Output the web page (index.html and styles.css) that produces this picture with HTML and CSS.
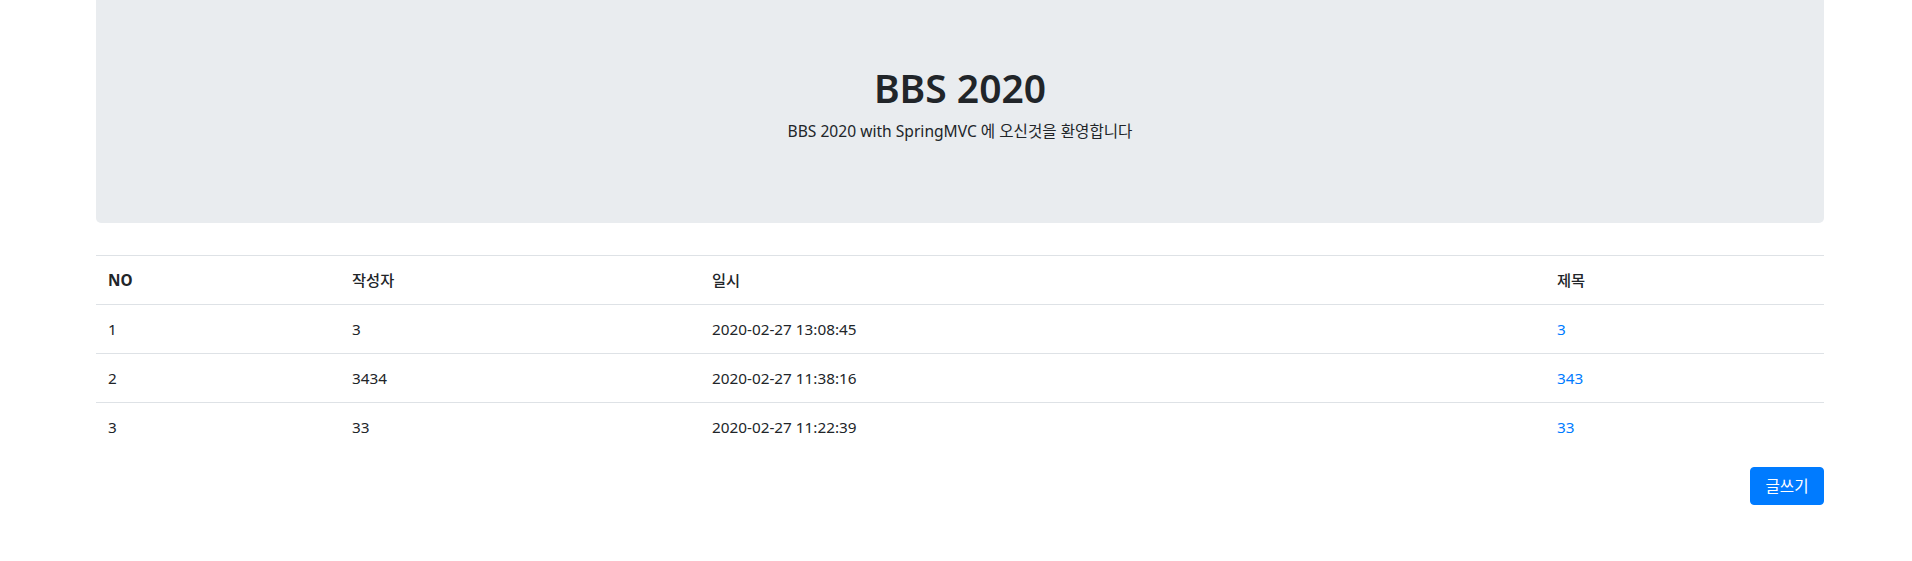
FILE: index.html
```html
<!DOCTYPE html>
<html lang="ko">
<head>
<meta charset="utf-8">
<title>BBS 2020</title>
<link rel="stylesheet" href="styles.css">
</head>
<body>
<div class="container">
  <header class="jumbotron">
    <h1 class="title">BBS 2020</h1>
    <p class="lead">BBS 2020 with SpringMVC 에 오신것을 환영합니다</p>
  </header>
  <table class="table">
    <tr>
      <th class="c-no">NO</th>
      <th class="c-writer">작성자</th>
      <th class="c-date">일시</th>
      <th class="c-subject">제목</th>
    </tr>
    <tr>
      <td>1</td><td>3</td><td>2020-02-27 13:08:45</td><td><a href="#">3</a></td>
    </tr>
    <tr>
      <td>2</td><td>3434</td><td>2020-02-27 11:38:16</td><td><a href="#">343</a></td>
    </tr>
    <tr>
      <td>3</td><td>33</td><td>2020-02-27 11:22:39</td><td><a href="#">33</a></td>
    </tr>
  </table>
  <div class="actions">
    <button class="btn" type="button">글쓰기</button>
  </div>
</div>
</body>
</html>
```
FILE: styles.css
```css
* { box-sizing: border-box; }
html, body {
  margin: 0;
  padding: 0;
  background: #fff;
}
body {
  font-family: "Noto Sans", "Noto Sans CJK KR", sans-serif;
  font-size: 16px;
  line-height: 1.5;
  color: #212529;
}
.container {
  padding: 0 88px 0 96px;
}
.jumbotron {
  background: #e9ecef;
  border-radius: 0 0 5px 5px;
  padding: 64px 32px;
  margin-bottom: 32px;
  text-align: center;
}
.title {
  margin: 0 0 8px;
  font-size: 39px;
  line-height: 48px;
  font-weight: 600;
}
.lead {
  margin: 0 0 16px;
  font-size: 15.6px;
}
.table {
  width: 100%;
  border-collapse: collapse;
  margin-bottom: 16px;
  table-layout: fixed;
}
.table th, .table td {
  padding: 12px;
  border-top: 1px solid #dee2e6;
  text-align: left;
  vertical-align: top;
  font-size: 15.3px;
  line-height: 24px;
}
.table th { font-weight: 700; }
.table th.c-writer, .table th.c-date, .table th.c-subject { font-weight: 500; }
.c-no { width: 244px; }
.c-writer { width: 360px; }
.c-date { width: 845px; }
.c-subject { width: 279px; }
.table a {
  color: #007bff;
  text-decoration: none;
}
.actions {
  display: flex;
  justify-content: flex-end;
}
.btn {
  font-family: inherit;
  font-size: 15.6px;
  line-height: 24px;
  color: #fff;
  background: #007bff;
  border: 1px solid #007bff;
  border-radius: 4px;
  padding: 6px 12px;
  height: 38px;
  width: 74px;
  cursor: pointer;
}
```
